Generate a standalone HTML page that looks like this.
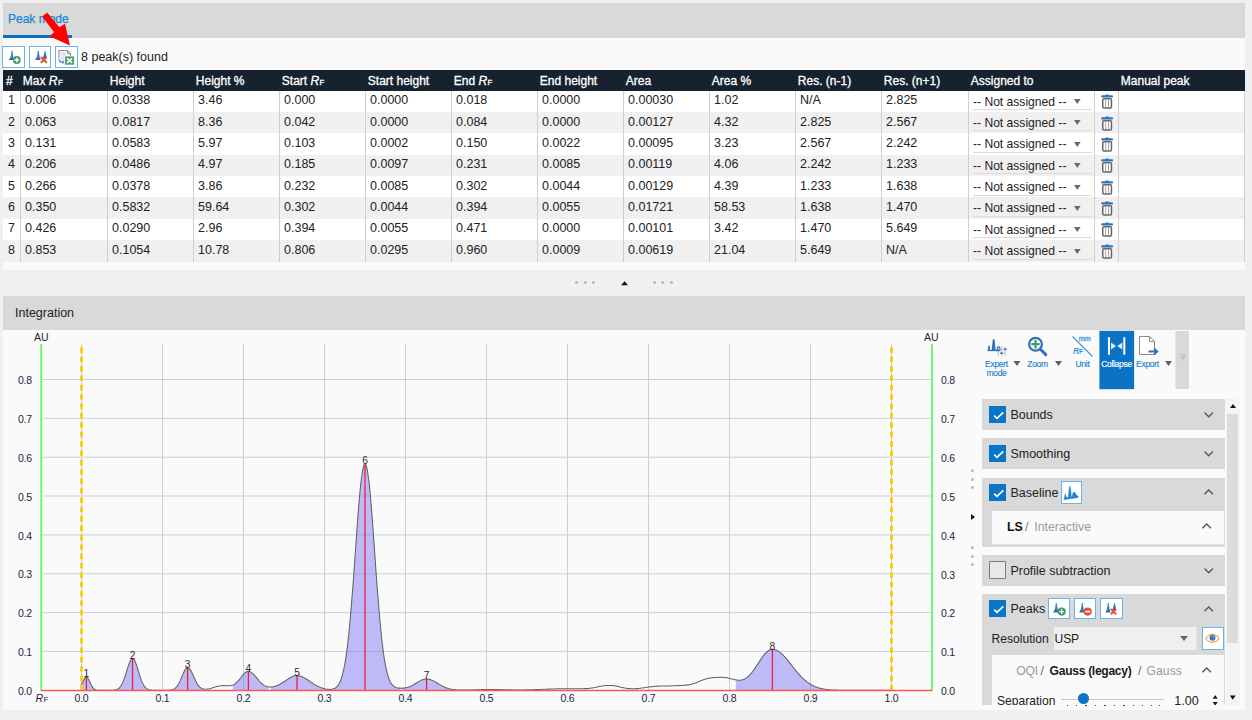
<!DOCTYPE html>
<html><head><meta charset="utf-8">
<style>
*{box-sizing:border-box;margin:0;padding:0}
html,body{width:1252px;height:720px;overflow:hidden;background:#f0f0f0;font-family:"Liberation Sans",sans-serif;color:#222;font-size:12px}
.abs{position:absolute}
#tabbar{position:absolute;left:3px;top:3px;width:1242px;height:35px;background:#d9d9d9}
#tabtxt{position:absolute;left:8px;top:12px;font-size:12px;color:#1a86d4;white-space:nowrap;-webkit-text-stroke:0.25px #1a86d4}
#tabline{position:absolute;left:3px;top:35px;width:69px;height:3px;background:#0b72c5}
#top{position:absolute;left:3px;top:38px;width:1242px;height:232px;background:#fafafa}
.tbtn{position:absolute;top:46px;width:23px;height:22px;border:1px solid #6cb2e6;background:#fff}
#found{position:absolute;left:81px;top:50.4px;font-size:12.5px;color:#222;white-space:nowrap}
.thead{position:absolute;left:3px;top:70px;width:1242px;height:20.5px;background:#16232f}
.th{position:absolute;top:3.5px;color:#fff;font-size:12px;white-space:nowrap;-webkit-text-stroke:0.3px #fff}
.th i{font-style:italic;font-size:12.2px}
.th small{font-size:8px;margin-left:0.3px}
.tr{position:absolute;left:3px;width:1242px;height:21.375px}
.td{position:absolute;top:2.7px;font-size:12.5px;color:#222;white-space:nowrap}
.vl{position:absolute;top:90.5px;height:171px;width:1px;background:#cfcfcf}
.dd{position:absolute;left:970px;top:4px;font-size:12.1px;color:#222;white-space:nowrap}
.ddarr{position:absolute;left:1071.3px;top:8.6px}
.ddline{position:absolute;left:970px;top:18.6px;width:118.6px;height:1px;background:#dcdcdc}
.trash{position:absolute;left:1098.2px;top:3.7px;width:13px;height:15px}
#gap{position:absolute;left:0;top:270px;width:1252px;height:26px}
.dot{position:absolute;width:3px;height:3px;border-radius:50%;background:#b8b8b8}
#inthdr{position:absolute;left:3px;top:296px;width:1242px;height:34px;background:#d9d9d9}
#inttxt{position:absolute;left:15px;top:305.6px;font-size:12.5px;color:#222}
#chartbg{position:absolute;left:3px;top:330px;width:1242px;height:379.6px;background:#fafafa}
#chart{position:absolute;left:0;top:0;width:1252px;height:720px}
.yl{position:absolute;font-size:10.5px;color:#1e1e3c;white-space:nowrap}
.xl{position:absolute;font-size:10.5px;color:#1e1e3c;white-space:nowrap}
.tool{position:absolute;font-size:8.5px;color:#1a80c8;text-align:center;line-height:9.3px;white-space:nowrap;letter-spacing:-0.3px;-webkit-text-stroke:0.15px currentColor}
.panel{position:absolute;left:982px;width:243px;background:#d9d9d9}
.cb{position:absolute;left:7px;width:17.2px;height:17.2px;background:#0a74c6}
.cb svg{position:absolute;left:3px;top:4px}
.ptitle{position:absolute;left:28px;font-size:12.5px;color:#222;white-space:nowrap}
.chev{position:absolute;left:220px}
.ibtn{position:absolute;width:22px;height:22px;border:1px solid #6cb2e6;background:#fff}
</style></head><body>
<div id="tabbar"></div>
<div id="tabtxt">Peak mode</div>
<div id="tabline"></div>
<div id="top"></div>
<div class="tbtn" style="left:2.4px;width:22.4px;height:21.6px;top:46.3px"></div>
<div class="tbtn" style="left:29.1px;width:21.7px;height:21.6px;top:46.3px"></div>
<div class="tbtn" style="left:55.3px;width:22.3px;height:21.6px;top:46.3px"></div>
<svg class="abs" style="left:0;top:0" width="90" height="70" viewBox="0 0 90 70">
 <defs><linearGradient id="pk" x1="0" y1="0" x2="0" y2="1"><stop offset="0" stop-color="#4d8fd6"/><stop offset="1" stop-color="#2e66b0"/></linearGradient></defs>
 <!-- btn1 -->
 <path d="M8 60 C10.5 59.5 11 56 11.4 51 Q12 49.5 12.6 51 C13 56 13.5 59.5 14.5 60 Z" fill="url(#pk)"/>
 <circle cx="16.8" cy="60" r="3.9" fill="#3e9a66"/>
 <path d="M16.8 57.6 V62.4 M14.4 60 H19.2" stroke="#fff" stroke-width="1.3"/>
 <!-- btn2 -->
 <path d="M34.5 60 C36.5 59.5 37.2 56 37.7 51 Q38.3 49.5 38.9 51 C39.4 56 40 59.5 41 60 Z" fill="url(#pk)"/>
 <path d="M42.5 58 C43.5 57 44 54 44.5 51.3 Q45 50 45.5 51.3 C46 54 46.5 57 47 58 Z" fill="url(#pk)"/>
 <path d="M40.9 57 L46.7 62.8 M46.7 57 L40.9 62.8" stroke="#e05438" stroke-width="2"/>
 <!-- btn3 -->
 <path d="M59 58.5 V50.5 H67.5 L70.5 53.8 V56" fill="none" stroke="#8d8d8d" stroke-width="1.1"/>
 <path d="M67.5 50.5 V53.8 H70.5" fill="none" stroke="#8d8d8d" stroke-width="0.9"/>
 <path d="M60.8 53 H66 M60.8 55 H66 M60.8 57 H64.5 M60.8 59 H64" stroke="#c4c4c4" stroke-width="0.9"/>
 <path d="M59.2 59.3 Q59.2 62.2 62 62.2 H63" fill="none" stroke="#4a86cc" stroke-width="1.3"/>
 <path d="M62.5 60.2 L64.6 62.2 L62.5 64.2 Z" fill="#4a86cc"/>
 <rect x="65" y="56.4" width="9.1" height="8.3" fill="#4f9e6c"/>
 <path d="M67 58.3 L72.1 62.8 M72.1 58.3 L67 62.8" stroke="#fff" stroke-width="1.6"/>
 <!-- red arrow -->
 <path d="M42.2 16.6 L47.2 12.5 L59.4 27.2 L65 23.75 L70 45.6 L49.4 36.25 L54.1 32.2 Z" fill="#ff0000"/>
</svg>
<div id="found">8 peak(s) found</div>
<div class="thead"><span class="th" style="left:3.0px">#</span><span class="th" style="left:19.8px">Max <i>R</i><small>F</small></span><span class="th" style="left:106.8px">Height</span><span class="th" style="left:192.8px">Height %</span><span class="th" style="left:278.8px">Start <i>R</i><small>F</small></span><span class="th" style="left:364.8px">Start height</span><span class="th" style="left:450.8px">End <i>R</i><small>F</small></span><span class="th" style="left:536.8px">End height</span><span class="th" style="left:622.8px">Area</span><span class="th" style="left:708.8px">Area %</span><span class="th" style="left:794.8px">Res. (n-1)</span><span class="th" style="left:880.8px">Res. (n+1)</span><span class="th" style="left:967.8px">Assigned to</span><span class="th" style="left:1093.8px"></span><span class="th" style="left:1117.8px">Manual peak</span></div>
<div class="tr" style="top:90.500px;background:#ffffff"><span class="td" style="left:5px">1</span><span class="td" style="left:22px">0.006</span><span class="td" style="left:109px">0.0338</span><span class="td" style="left:195px">3.46</span><span class="td" style="left:281px">0.000</span><span class="td" style="left:367px">0.0000</span><span class="td" style="left:453px">0.018</span><span class="td" style="left:539px">0.0000</span><span class="td" style="left:625px">0.00030</span><span class="td" style="left:711px">1.02</span><span class="td" style="left:797px">N/A</span><span class="td" style="left:883px">2.825</span><span class="dd">-- Not assigned --</span><svg class="ddarr" width="8" height="6" viewBox="0 0 8 6"><path d="M0 0 H6.6 L3.3 5 Z" fill="#6a6a6a"/></svg><span class="ddline"></span><span class="trash"><svg width="13" height="15" viewBox="0 0 13 15"><rect x="0.2" y="1.3" width="11.8" height="2.2" rx="1" fill="#2a74c4"/><rect x="4.3" y="0.6" width="3.6" height="1.3" rx="0.6" fill="#2a74c4"/><rect x="1.75" y="4.65" width="8.7" height="9.3" rx="1.2" fill="#fff" stroke="#676767" stroke-width="1.5"/><path d="M4.7 5.4 V13.2 M7.5 5.4 V13.2" stroke="#9a9a9a" stroke-width="0.9"/></svg></span></div><div class="tr" style="top:111.875px;background:#f0f0f0"><span class="td" style="left:5px">2</span><span class="td" style="left:22px">0.063</span><span class="td" style="left:109px">0.0817</span><span class="td" style="left:195px">8.36</span><span class="td" style="left:281px">0.042</span><span class="td" style="left:367px">0.0000</span><span class="td" style="left:453px">0.084</span><span class="td" style="left:539px">0.0000</span><span class="td" style="left:625px">0.00127</span><span class="td" style="left:711px">4.32</span><span class="td" style="left:797px">2.825</span><span class="td" style="left:883px">2.567</span><span class="dd">-- Not assigned --</span><svg class="ddarr" width="8" height="6" viewBox="0 0 8 6"><path d="M0 0 H6.6 L3.3 5 Z" fill="#6a6a6a"/></svg><span class="ddline"></span><span class="trash"><svg width="13" height="15" viewBox="0 0 13 15"><rect x="0.2" y="1.3" width="11.8" height="2.2" rx="1" fill="#2a74c4"/><rect x="4.3" y="0.6" width="3.6" height="1.3" rx="0.6" fill="#2a74c4"/><rect x="1.75" y="4.65" width="8.7" height="9.3" rx="1.2" fill="#fff" stroke="#676767" stroke-width="1.5"/><path d="M4.7 5.4 V13.2 M7.5 5.4 V13.2" stroke="#9a9a9a" stroke-width="0.9"/></svg></span></div><div class="tr" style="top:133.250px;background:#ffffff"><span class="td" style="left:5px">3</span><span class="td" style="left:22px">0.131</span><span class="td" style="left:109px">0.0583</span><span class="td" style="left:195px">5.97</span><span class="td" style="left:281px">0.103</span><span class="td" style="left:367px">0.0002</span><span class="td" style="left:453px">0.150</span><span class="td" style="left:539px">0.0022</span><span class="td" style="left:625px">0.00095</span><span class="td" style="left:711px">3.23</span><span class="td" style="left:797px">2.567</span><span class="td" style="left:883px">2.242</span><span class="dd">-- Not assigned --</span><svg class="ddarr" width="8" height="6" viewBox="0 0 8 6"><path d="M0 0 H6.6 L3.3 5 Z" fill="#6a6a6a"/></svg><span class="ddline"></span><span class="trash"><svg width="13" height="15" viewBox="0 0 13 15"><rect x="0.2" y="1.3" width="11.8" height="2.2" rx="1" fill="#2a74c4"/><rect x="4.3" y="0.6" width="3.6" height="1.3" rx="0.6" fill="#2a74c4"/><rect x="1.75" y="4.65" width="8.7" height="9.3" rx="1.2" fill="#fff" stroke="#676767" stroke-width="1.5"/><path d="M4.7 5.4 V13.2 M7.5 5.4 V13.2" stroke="#9a9a9a" stroke-width="0.9"/></svg></span></div><div class="tr" style="top:154.625px;background:#f0f0f0"><span class="td" style="left:5px">4</span><span class="td" style="left:22px">0.206</span><span class="td" style="left:109px">0.0486</span><span class="td" style="left:195px">4.97</span><span class="td" style="left:281px">0.185</span><span class="td" style="left:367px">0.0097</span><span class="td" style="left:453px">0.231</span><span class="td" style="left:539px">0.0085</span><span class="td" style="left:625px">0.00119</span><span class="td" style="left:711px">4.06</span><span class="td" style="left:797px">2.242</span><span class="td" style="left:883px">1.233</span><span class="dd">-- Not assigned --</span><svg class="ddarr" width="8" height="6" viewBox="0 0 8 6"><path d="M0 0 H6.6 L3.3 5 Z" fill="#6a6a6a"/></svg><span class="ddline"></span><span class="trash"><svg width="13" height="15" viewBox="0 0 13 15"><rect x="0.2" y="1.3" width="11.8" height="2.2" rx="1" fill="#2a74c4"/><rect x="4.3" y="0.6" width="3.6" height="1.3" rx="0.6" fill="#2a74c4"/><rect x="1.75" y="4.65" width="8.7" height="9.3" rx="1.2" fill="#fff" stroke="#676767" stroke-width="1.5"/><path d="M4.7 5.4 V13.2 M7.5 5.4 V13.2" stroke="#9a9a9a" stroke-width="0.9"/></svg></span></div><div class="tr" style="top:176.000px;background:#ffffff"><span class="td" style="left:5px">5</span><span class="td" style="left:22px">0.266</span><span class="td" style="left:109px">0.0378</span><span class="td" style="left:195px">3.86</span><span class="td" style="left:281px">0.232</span><span class="td" style="left:367px">0.0085</span><span class="td" style="left:453px">0.302</span><span class="td" style="left:539px">0.0044</span><span class="td" style="left:625px">0.00129</span><span class="td" style="left:711px">4.39</span><span class="td" style="left:797px">1.233</span><span class="td" style="left:883px">1.638</span><span class="dd">-- Not assigned --</span><svg class="ddarr" width="8" height="6" viewBox="0 0 8 6"><path d="M0 0 H6.6 L3.3 5 Z" fill="#6a6a6a"/></svg><span class="ddline"></span><span class="trash"><svg width="13" height="15" viewBox="0 0 13 15"><rect x="0.2" y="1.3" width="11.8" height="2.2" rx="1" fill="#2a74c4"/><rect x="4.3" y="0.6" width="3.6" height="1.3" rx="0.6" fill="#2a74c4"/><rect x="1.75" y="4.65" width="8.7" height="9.3" rx="1.2" fill="#fff" stroke="#676767" stroke-width="1.5"/><path d="M4.7 5.4 V13.2 M7.5 5.4 V13.2" stroke="#9a9a9a" stroke-width="0.9"/></svg></span></div><div class="tr" style="top:197.375px;background:#f0f0f0"><span class="td" style="left:5px">6</span><span class="td" style="left:22px">0.350</span><span class="td" style="left:109px">0.5832</span><span class="td" style="left:195px">59.64</span><span class="td" style="left:281px">0.302</span><span class="td" style="left:367px">0.0044</span><span class="td" style="left:453px">0.394</span><span class="td" style="left:539px">0.0055</span><span class="td" style="left:625px">0.01721</span><span class="td" style="left:711px">58.53</span><span class="td" style="left:797px">1.638</span><span class="td" style="left:883px">1.470</span><span class="dd">-- Not assigned --</span><svg class="ddarr" width="8" height="6" viewBox="0 0 8 6"><path d="M0 0 H6.6 L3.3 5 Z" fill="#6a6a6a"/></svg><span class="ddline"></span><span class="trash"><svg width="13" height="15" viewBox="0 0 13 15"><rect x="0.2" y="1.3" width="11.8" height="2.2" rx="1" fill="#2a74c4"/><rect x="4.3" y="0.6" width="3.6" height="1.3" rx="0.6" fill="#2a74c4"/><rect x="1.75" y="4.65" width="8.7" height="9.3" rx="1.2" fill="#fff" stroke="#676767" stroke-width="1.5"/><path d="M4.7 5.4 V13.2 M7.5 5.4 V13.2" stroke="#9a9a9a" stroke-width="0.9"/></svg></span></div><div class="tr" style="top:218.750px;background:#ffffff"><span class="td" style="left:5px">7</span><span class="td" style="left:22px">0.426</span><span class="td" style="left:109px">0.0290</span><span class="td" style="left:195px">2.96</span><span class="td" style="left:281px">0.394</span><span class="td" style="left:367px">0.0055</span><span class="td" style="left:453px">0.471</span><span class="td" style="left:539px">0.0000</span><span class="td" style="left:625px">0.00101</span><span class="td" style="left:711px">3.42</span><span class="td" style="left:797px">1.470</span><span class="td" style="left:883px">5.649</span><span class="dd">-- Not assigned --</span><svg class="ddarr" width="8" height="6" viewBox="0 0 8 6"><path d="M0 0 H6.6 L3.3 5 Z" fill="#6a6a6a"/></svg><span class="ddline"></span><span class="trash"><svg width="13" height="15" viewBox="0 0 13 15"><rect x="0.2" y="1.3" width="11.8" height="2.2" rx="1" fill="#2a74c4"/><rect x="4.3" y="0.6" width="3.6" height="1.3" rx="0.6" fill="#2a74c4"/><rect x="1.75" y="4.65" width="8.7" height="9.3" rx="1.2" fill="#fff" stroke="#676767" stroke-width="1.5"/><path d="M4.7 5.4 V13.2 M7.5 5.4 V13.2" stroke="#9a9a9a" stroke-width="0.9"/></svg></span></div><div class="tr" style="top:240.125px;background:#f0f0f0"><span class="td" style="left:5px">8</span><span class="td" style="left:22px">0.853</span><span class="td" style="left:109px">0.1054</span><span class="td" style="left:195px">10.78</span><span class="td" style="left:281px">0.806</span><span class="td" style="left:367px">0.0295</span><span class="td" style="left:453px">0.960</span><span class="td" style="left:539px">0.0009</span><span class="td" style="left:625px">0.00619</span><span class="td" style="left:711px">21.04</span><span class="td" style="left:797px">5.649</span><span class="td" style="left:883px">N/A</span><span class="dd">-- Not assigned --</span><svg class="ddarr" width="8" height="6" viewBox="0 0 8 6"><path d="M0 0 H6.6 L3.3 5 Z" fill="#6a6a6a"/></svg><span class="ddline"></span><span class="trash"><svg width="13" height="15" viewBox="0 0 13 15"><rect x="0.2" y="1.3" width="11.8" height="2.2" rx="1" fill="#2a74c4"/><rect x="4.3" y="0.6" width="3.6" height="1.3" rx="0.6" fill="#2a74c4"/><rect x="1.75" y="4.65" width="8.7" height="9.3" rx="1.2" fill="#fff" stroke="#676767" stroke-width="1.5"/><path d="M4.7 5.4 V13.2 M7.5 5.4 V13.2" stroke="#9a9a9a" stroke-width="0.9"/></svg></span></div>
<div class="vl" style="left:20px"></div><div class="vl" style="left:107px"></div><div class="vl" style="left:193px"></div><div class="vl" style="left:279px"></div><div class="vl" style="left:365px"></div><div class="vl" style="left:451px"></div><div class="vl" style="left:537px"></div><div class="vl" style="left:623px"></div><div class="vl" style="left:709px"></div><div class="vl" style="left:795px"></div><div class="vl" style="left:881px"></div><div class="vl" style="left:968px"></div><div class="vl" style="left:1094px"></div><div class="vl" style="left:1118px"></div><div class="vl" style="left:1244px"></div>
<div class="dot" style="left:575px;top:281px"></div>
<div class="dot" style="left:584px;top:281px"></div>
<div class="dot" style="left:592px;top:281px"></div>
<svg class="abs" style="left:620px;top:280px" width="10" height="7" viewBox="0 0 10 7"><path d="M1.2 5.2 H8 L4.6 1.2 Z" fill="#111"/></svg>
<div class="dot" style="left:653px;top:281px"></div>
<div class="dot" style="left:661px;top:281px"></div>
<div class="dot" style="left:670px;top:281px"></div>
<div id="inthdr"></div>
<div id="inttxt">Integration</div>
<div id="chartbg"></div>
<svg id="chart" width="1252" height="720" viewBox="0 0 1252 720" font-family="Liberation Sans" fill="#1e1e3c">
<line x1="162.5" y1="344" x2="162.5" y2="690" stroke="#c5d2de" stroke-width="1"/>
<line x1="243.5" y1="344" x2="243.5" y2="690" stroke="#c5d2de" stroke-width="1"/>
<line x1="324.5" y1="344" x2="324.5" y2="690" stroke="#c5d2de" stroke-width="1"/>
<line x1="405.5" y1="344" x2="405.5" y2="690" stroke="#c5d2de" stroke-width="1"/>
<line x1="486.5" y1="344" x2="486.5" y2="690" stroke="#c5d2de" stroke-width="1"/>
<line x1="567.5" y1="344" x2="567.5" y2="690" stroke="#c5d2de" stroke-width="1"/>
<line x1="648.5" y1="344" x2="648.5" y2="690" stroke="#c5d2de" stroke-width="1"/>
<line x1="729.5" y1="344" x2="729.5" y2="690" stroke="#c5d2de" stroke-width="1"/>
<line x1="810.5" y1="344" x2="810.5" y2="690" stroke="#c5d2de" stroke-width="1"/>
<line x1="41" y1="651.4" x2="931" y2="651.4" stroke="#c5d2de" stroke-width="1"/>
<line x1="41" y1="612.6" x2="931" y2="612.6" stroke="#c5d2de" stroke-width="1"/>
<line x1="41" y1="573.8" x2="931" y2="573.8" stroke="#c5d2de" stroke-width="1"/>
<line x1="41" y1="534.9" x2="931" y2="534.9" stroke="#c5d2de" stroke-width="1"/>
<line x1="41" y1="496.0" x2="931" y2="496.0" stroke="#c5d2de" stroke-width="1"/>
<line x1="41" y1="457.2" x2="931" y2="457.2" stroke="#c5d2de" stroke-width="1"/>
<line x1="41" y1="418.3" x2="931" y2="418.3" stroke="#c5d2de" stroke-width="1"/>
<line x1="41" y1="379.5" x2="931" y2="379.5" stroke="#c5d2de" stroke-width="1"/>
<line x1="81.5" y1="344" x2="81.5" y2="690" stroke="#c5d2de" stroke-width="1"/>
<line x1="891.5" y1="344" x2="891.5" y2="690" stroke="#c5d2de" stroke-width="1"/>
<path d="M81.5 684.9 L81.9 684.1 L82.3 683.2 L82.7 682.3 L83.1 681.5 L83.5 680.6 L83.9 679.8 L84.3 679.0 L84.7 678.4 L85.1 677.9 L85.5 677.5 L86.0 677.2 L86.4 677.2 L86.8 677.2 L87.2 677.5 L87.6 677.9 L88.0 678.4 L88.4 679.0 L88.8 679.8 L89.2 680.6 L89.6 681.5 L90.0 682.3 L90.4 683.2 L90.8 684.1 L91.2 684.9 L91.6 685.7 L92.0 686.4 L92.4 687.0 L92.8 687.6 L93.2 688.1 L93.7 688.5 L94.1 688.9 L94.5 689.2 L94.9 689.4 L95.3 689.6 L95.7 689.8 L96.1 689.9 L96.1 690.3 L81.5 690.3 Z" fill="#7a72f4" fill-opacity="0.47" stroke="none"/>
<path d="M117.0 689.4 L117.4 689.2 L117.8 689.0 L118.2 688.7 L118.6 688.5 L119.0 688.1 L119.4 687.8 L119.8 687.3 L120.2 686.9 L120.6 686.3 L121.0 685.7 L121.5 685.1 L121.9 684.3 L122.3 683.5 L122.7 682.7 L123.1 681.8 L123.5 680.8 L123.9 679.7 L124.3 678.6 L124.7 677.4 L125.1 676.1 L125.5 674.9 L125.9 673.6 L126.3 672.2 L126.7 670.9 L127.2 669.5 L127.6 668.2 L128.0 666.9 L128.4 665.7 L128.8 664.5 L129.2 663.4 L129.6 662.3 L130.0 661.4 L130.4 660.6 L130.8 659.9 L131.2 659.3 L131.6 658.9 L132.0 658.7 L132.4 658.6 L132.9 658.6 L133.3 658.8 L133.7 659.2 L134.1 659.7 L134.5 660.3 L134.9 661.0 L135.3 661.9 L135.7 662.9 L136.1 664.0 L136.5 665.2 L136.9 666.4 L137.3 667.7 L137.7 669.0 L138.1 670.3 L138.6 671.7 L139.0 673.0 L139.4 674.3 L139.8 675.6 L140.2 676.9 L140.6 678.1 L141.0 679.2 L141.4 680.3 L141.8 681.3 L142.2 682.3 L142.6 683.2 L143.0 684.0 L143.4 684.8 L143.8 685.5 L144.2 686.1 L144.7 686.6 L145.1 687.1 L145.5 687.6 L145.9 688.0 L146.3 688.3 L146.7 688.6 L147.1 688.9 L147.5 689.1 L147.9 689.3 L148.3 689.5 L148.7 689.6 L149.1 689.7 L149.5 689.8 L149.5 690.3 L117.0 690.3 Z" fill="#7a72f4" fill-opacity="0.47" stroke="none"/>
<path d="M166.4 690.3 L166.8 690.3 L167.2 690.3 L167.6 690.3 L168.0 690.2 L168.4 690.2 L168.8 690.2 L169.2 690.2 L169.6 690.2 L170.0 690.1 L170.5 690.1 L170.9 690.0 L171.3 689.9 L171.7 689.9 L172.1 689.8 L172.5 689.7 L172.9 689.5 L173.3 689.4 L173.7 689.2 L174.1 689.0 L174.5 688.7 L174.9 688.4 L175.3 688.1 L175.7 687.8 L176.2 687.4 L176.6 686.9 L177.0 686.4 L177.4 685.9 L177.8 685.3 L178.2 684.6 L178.6 683.9 L179.0 683.2 L179.4 682.4 L179.8 681.5 L180.2 680.6 L180.6 679.7 L181.0 678.7 L181.4 677.8 L181.8 676.8 L182.3 675.8 L182.7 674.8 L183.1 673.9 L183.5 672.9 L183.9 672.1 L184.3 671.2 L184.7 670.5 L185.1 669.8 L185.5 669.2 L185.9 668.6 L186.3 668.2 L186.7 667.9 L187.1 667.7 L187.5 667.7 L187.9 667.7 L188.4 667.8 L188.8 668.1 L189.2 668.4 L189.6 668.8 L190.0 669.3 L190.4 669.9 L190.8 670.6 L191.2 671.3 L191.6 672.1 L192.0 672.9 L192.4 673.7 L192.8 674.6 L193.2 675.5 L193.6 676.4 L194.1 677.4 L194.5 678.3 L194.9 679.2 L195.3 680.0 L195.7 680.9 L196.1 681.7 L196.5 682.5 L196.9 683.2 L197.3 683.9 L197.7 684.5 L198.1 685.1 L198.5 685.7 L198.9 686.2 L199.3 686.6 L199.7 687.0 L200.2 687.4 L200.6 687.7 L201.0 688.0 L201.4 688.3 L201.8 688.5 L202.2 688.7 L202.6 688.8 L203.0 689.0 L203.0 690.3 L166.4 690.3 Z" fill="#7a72f4" fill-opacity="0.47" stroke="none"/>
<path d="M232.8 685.0 L233.2 684.8 L233.6 684.6 L234.0 684.4 L234.4 684.2 L234.8 683.9 L235.2 683.6 L235.7 683.3 L236.1 683.0 L236.5 682.6 L236.9 682.2 L237.3 681.8 L237.7 681.4 L238.1 680.9 L238.5 680.4 L238.9 680.0 L239.3 679.5 L239.7 679.0 L240.1 678.5 L240.5 677.9 L240.9 677.4 L241.4 676.9 L241.8 676.4 L242.2 675.9 L242.6 675.4 L243.0 674.9 L243.4 674.5 L243.8 674.0 L244.2 673.6 L244.6 673.2 L245.0 672.9 L245.4 672.5 L245.8 672.3 L246.2 672.0 L246.6 671.8 L247.0 671.6 L247.5 671.5 L247.9 671.5 L248.3 671.4 L248.7 671.4 L249.1 671.5 L249.5 671.6 L249.9 671.7 L250.3 671.9 L250.7 672.1 L251.1 672.3 L251.5 672.6 L251.9 672.9 L252.3 673.2 L252.7 673.6 L253.2 674.0 L253.6 674.4 L254.0 674.8 L254.4 675.2 L254.8 675.7 L255.2 676.1 L255.6 676.6 L256.0 677.1 L256.4 677.6 L256.8 678.1 L257.2 678.6 L257.6 679.1 L258.0 679.6 L258.4 680.1 L258.8 680.5 L259.3 681.0 L259.7 681.4 L260.1 681.9 L260.5 682.3 L260.9 682.7 L261.3 683.1 L261.7 683.5 L262.1 683.8 L262.5 684.2 L262.9 684.5 L263.3 684.8 L263.7 685.1 L264.1 685.3 L264.5 685.6 L264.9 685.8 L265.4 686.0 L265.8 686.2 L266.2 686.3 L266.6 686.5 L267.0 686.6 L267.4 686.7 L267.8 686.8 L268.2 686.9 L268.6 686.9 L268.6 690.3 L232.8 690.3 Z" fill="#7a72f4" fill-opacity="0.47" stroke="none"/>
<path d="M270.9 687.0 L271.3 687.0 L271.7 687.0 L272.1 686.9 L272.5 686.9 L272.9 686.8 L273.3 686.7 L273.7 686.6 L274.1 686.5 L274.5 686.4 L274.9 686.3 L275.3 686.2 L275.8 686.1 L276.2 685.9 L276.6 685.8 L277.0 685.6 L277.4 685.5 L277.8 685.3 L278.2 685.1 L278.6 684.9 L279.0 684.7 L279.4 684.5 L279.8 684.3 L280.2 684.1 L280.6 683.9 L281.0 683.6 L281.4 683.4 L281.8 683.2 L282.3 682.9 L282.7 682.6 L283.1 682.4 L283.5 682.1 L283.9 681.8 L284.3 681.6 L284.7 681.3 L285.1 681.0 L285.5 680.7 L285.9 680.5 L286.3 680.2 L286.7 679.9 L287.1 679.6 L287.5 679.3 L287.9 679.1 L288.3 678.8 L288.8 678.6 L289.2 678.3 L289.6 678.1 L290.0 677.8 L290.4 677.6 L290.8 677.4 L291.2 677.2 L291.6 677.0 L292.0 676.8 L292.4 676.6 L292.8 676.4 L293.2 676.3 L293.6 676.1 L294.0 676.0 L294.4 675.9 L294.8 675.8 L295.2 675.8 L295.7 675.7 L296.1 675.6 L296.5 675.6 L296.9 675.6 L297.3 675.6 L297.7 675.6 L298.1 675.7 L298.5 675.7 L298.9 675.8 L299.3 675.9 L299.7 675.9 L300.1 676.0 L300.5 676.2 L300.9 676.3 L301.3 676.4 L301.7 676.6 L302.2 676.7 L302.6 676.9 L303.0 677.1 L303.4 677.3 L303.8 677.5 L304.2 677.7 L304.6 678.0 L305.0 678.2 L305.4 678.4 L305.8 678.7 L306.2 678.9 L306.6 679.2 L307.0 679.4 L307.4 679.7 L307.8 680.0 L308.2 680.2 L308.7 680.5 L309.1 680.8 L309.5 681.1 L309.9 681.4 L310.3 681.6 L310.7 681.9 L311.1 682.2 L311.5 682.5 L311.9 682.7 L312.3 683.0 L312.7 683.3 L313.1 683.6 L313.5 683.8 L313.9 684.1 L314.3 684.3 L314.7 684.6 L315.2 684.8 L315.6 685.1 L316.0 685.3 L316.4 685.5 L316.8 685.7 L317.2 686.0 L317.6 686.2 L318.0 686.4 L318.4 686.6 L318.8 686.8 L319.2 686.9 L319.6 687.1 L320.0 687.3 L320.4 687.4 L320.8 687.6 L321.2 687.8 L321.7 687.9 L322.1 688.0 L322.5 688.2 L322.9 688.3 L323.3 688.4 L323.7 688.5 L324.1 688.6 L324.5 688.7 L324.9 688.8 L325.3 688.9 L325.7 689.0 L326.1 689.1 L326.1 690.3 L270.9 690.3 Z" fill="#7a72f4" fill-opacity="0.47" stroke="none"/>
<path d="M327.6 689.3 L328.0 689.3 L328.4 689.3 L328.8 689.4 L329.2 689.4 L329.6 689.4 L330.0 689.4 L330.4 689.4 L330.8 689.3 L331.2 689.3 L331.6 689.3 L332.0 689.2 L332.4 689.1 L332.9 689.0 L333.3 688.9 L333.7 688.8 L334.1 688.6 L334.5 688.4 L334.9 688.2 L335.3 688.0 L335.7 687.7 L336.1 687.4 L336.5 687.1 L336.9 686.7 L337.3 686.3 L337.7 685.8 L338.1 685.2 L338.5 684.6 L338.9 684.0 L339.3 683.3 L339.8 682.5 L340.2 681.6 L340.6 680.6 L341.0 679.6 L341.4 678.4 L341.8 677.2 L342.2 675.8 L342.6 674.4 L343.0 672.8 L343.4 671.1 L343.8 669.2 L344.2 667.2 L344.6 665.1 L345.0 662.8 L345.4 660.4 L345.8 657.8 L346.2 655.0 L346.7 652.1 L347.1 649.0 L347.5 645.8 L347.9 642.3 L348.3 638.7 L348.7 634.9 L349.1 630.9 L349.5 626.8 L349.9 622.5 L350.3 618.0 L350.7 613.4 L351.1 608.6 L351.5 603.6 L351.9 598.5 L352.3 593.3 L352.7 588.0 L353.1 582.5 L353.6 577.0 L354.0 571.4 L354.4 565.7 L354.8 560.0 L355.2 554.3 L355.6 548.6 L356.0 542.8 L356.4 537.2 L356.8 531.5 L357.2 526.0 L357.6 520.5 L358.0 515.2 L358.4 510.0 L358.8 505.0 L359.2 500.2 L359.6 495.6 L360.1 491.3 L360.5 487.2 L360.9 483.4 L361.3 479.8 L361.7 476.6 L362.1 473.7 L362.5 471.2 L362.9 469.0 L363.3 467.2 L363.7 465.7 L364.1 464.7 L364.5 464.0 L364.9 463.7 L365.3 463.9 L365.7 464.4 L366.1 465.3 L366.5 466.6 L367.0 468.2 L367.4 470.3 L367.8 472.7 L368.2 475.4 L368.6 478.5 L369.0 481.9 L369.4 485.7 L369.8 489.6 L370.2 493.9 L370.6 498.4 L371.0 503.1 L371.4 508.1 L371.8 513.2 L372.2 518.4 L372.6 523.8 L373.0 529.3 L373.4 534.9 L373.9 540.6 L374.3 546.3 L374.7 552.0 L375.1 557.8 L375.5 563.5 L375.9 569.2 L376.3 574.8 L376.7 580.4 L377.1 585.8 L377.5 591.2 L377.9 596.5 L378.3 601.6 L378.7 606.6 L379.1 611.4 L379.5 616.1 L379.9 620.7 L380.3 625.0 L380.8 629.2 L381.2 633.3 L381.6 637.1 L382.0 640.8 L382.4 644.3 L382.8 647.6 L383.2 650.7 L383.6 653.7 L384.0 656.5 L384.4 659.1 L384.8 661.6 L385.2 663.9 L385.6 666.1 L386.0 668.1 L386.4 670.0 L386.8 671.7 L387.2 673.3 L387.7 674.8 L388.1 676.2 L388.5 677.4 L388.9 678.6 L389.3 679.6 L389.7 680.6 L390.1 681.4 L390.5 682.2 L390.9 682.9 L391.3 683.6 L391.7 684.2 L392.1 684.7 L392.5 685.1 L392.9 685.6 L393.3 685.9 L393.7 686.3 L394.1 686.5 L394.6 686.8 L395.0 687.0 L395.4 687.2 L395.8 687.4 L396.2 687.5 L396.6 687.7 L397.0 687.8 L397.4 687.9 L397.8 687.9 L398.2 688.0 L398.6 688.0 L399.0 688.1 L399.4 688.1 L399.8 688.1 L400.2 688.2 L400.6 688.2 L400.6 690.3 L327.6 690.3 Z" fill="#7a72f4" fill-opacity="0.47" stroke="none"/>
<path d="M402.1 688.1 L402.5 688.1 L402.9 688.1 L403.3 688.0 L403.7 688.0 L404.1 688.0 L404.5 687.9 L404.9 687.9 L405.3 687.8 L405.8 687.7 L406.2 687.6 L406.6 687.5 L407.0 687.5 L407.4 687.3 L407.8 687.2 L408.2 687.1 L408.6 687.0 L409.0 686.9 L409.4 686.7 L409.8 686.6 L410.2 686.4 L410.6 686.2 L411.0 686.1 L411.4 685.9 L411.8 685.7 L412.3 685.5 L412.7 685.3 L413.1 685.0 L413.5 684.8 L413.9 684.6 L414.3 684.4 L414.7 684.1 L415.1 683.9 L415.5 683.6 L415.9 683.4 L416.3 683.1 L416.7 682.9 L417.1 682.7 L417.5 682.4 L417.9 682.2 L418.3 681.9 L418.7 681.7 L419.2 681.4 L419.6 681.2 L420.0 681.0 L420.4 680.8 L420.8 680.6 L421.2 680.4 L421.6 680.2 L422.0 680.0 L422.4 679.9 L422.8 679.7 L423.2 679.6 L423.6 679.5 L424.0 679.3 L424.4 679.3 L424.8 679.2 L425.2 679.1 L425.7 679.1 L426.1 679.0 L426.5 679.0 L426.9 679.0 L427.3 679.1 L427.7 679.1 L428.1 679.1 L428.5 679.2 L428.9 679.3 L429.3 679.4 L429.7 679.5 L430.1 679.6 L430.5 679.7 L430.9 679.8 L431.3 680.0 L431.7 680.2 L432.1 680.3 L432.6 680.5 L433.0 680.7 L433.4 680.9 L433.8 681.1 L434.2 681.3 L434.6 681.5 L435.0 681.8 L435.4 682.0 L435.8 682.2 L436.2 682.5 L436.6 682.7 L437.0 682.9 L437.4 683.2 L437.8 683.4 L438.2 683.7 L438.6 683.9 L439.1 684.2 L439.5 684.4 L439.9 684.6 L440.3 684.9 L440.7 685.1 L441.1 685.3 L441.5 685.6 L441.9 685.8 L442.3 686.0 L442.7 686.2 L443.1 686.4 L443.5 686.6 L443.9 686.8 L444.3 687.0 L444.7 687.2 L445.1 687.3 L445.5 687.5 L446.0 687.7 L446.4 687.8 L446.8 688.0 L447.2 688.1 L447.6 688.3 L448.0 688.4 L448.4 688.5 L448.8 688.6 L449.2 688.7 L449.6 688.8 L450.0 688.9 L450.4 689.0 L450.8 689.1 L451.2 689.2 L451.6 689.3 L452.0 689.4 L452.5 689.4 L452.9 689.5 L453.3 689.5 L453.7 689.6 L454.1 689.6 L454.5 689.7 L454.9 689.7 L455.3 689.8 L455.7 689.8 L456.1 689.8 L456.5 689.9 L456.9 689.9 L457.3 689.9 L457.7 689.9 L458.1 690.0 L458.5 690.0 L458.9 690.0 L459.4 690.0 L459.8 690.0 L460.2 690.0 L460.6 690.0 L461.0 690.0 L461.4 690.0 L461.8 690.1 L462.2 690.1 L462.6 690.1 L463.0 690.1 L463.0 690.3 L402.1 690.3 Z" fill="#7a72f4" fill-opacity="0.47" stroke="none"/>
<path d="M735.8 679.8 L736.2 679.9 L736.6 680.0 L737.0 680.1 L737.4 680.1 L737.8 680.2 L738.3 680.2 L738.7 680.2 L739.1 680.2 L739.5 680.2 L739.9 680.2 L740.3 680.2 L740.7 680.2 L741.1 680.1 L741.5 680.1 L741.9 680.0 L742.3 679.9 L742.7 679.8 L743.1 679.6 L743.5 679.5 L743.9 679.3 L744.3 679.1 L744.7 678.9 L745.1 678.7 L745.6 678.5 L746.0 678.2 L746.4 677.9 L746.8 677.6 L747.2 677.3 L747.6 677.0 L748.0 676.6 L748.4 676.3 L748.8 675.9 L749.2 675.5 L749.6 675.1 L750.0 674.6 L750.4 674.2 L750.8 673.7 L751.2 673.2 L751.6 672.7 L752.0 672.2 L752.4 671.7 L752.9 671.2 L753.3 670.6 L753.7 670.1 L754.1 669.5 L754.5 668.9 L754.9 668.3 L755.3 667.7 L755.7 667.1 L756.1 666.5 L756.5 665.9 L756.9 665.3 L757.3 664.7 L757.7 664.0 L758.1 663.4 L758.5 662.8 L758.9 662.2 L759.3 661.5 L759.7 660.9 L760.1 660.3 L760.6 659.7 L761.0 659.1 L761.4 658.5 L761.8 657.9 L762.2 657.4 L762.6 656.8 L763.0 656.3 L763.4 655.7 L763.8 655.2 L764.2 654.7 L764.6 654.2 L765.0 653.8 L765.4 653.3 L765.8 652.9 L766.2 652.5 L766.6 652.1 L767.0 651.7 L767.4 651.4 L767.9 651.1 L768.3 650.8 L768.7 650.5 L769.1 650.3 L769.5 650.1 L769.9 649.9 L770.3 649.7 L770.7 649.6 L771.1 649.5 L771.5 649.4 L771.9 649.4 L772.3 649.3 L772.7 649.3 L773.1 649.4 L773.5 649.4 L773.9 649.5 L774.3 649.5 L774.7 649.6 L775.2 649.7 L775.6 649.9 L776.0 650.0 L776.4 650.2 L776.8 650.4 L777.2 650.6 L777.6 650.8 L778.0 651.0 L778.4 651.2 L778.8 651.5 L779.2 651.8 L779.6 652.1 L780.0 652.4 L780.4 652.7 L780.8 653.0 L781.2 653.3 L781.6 653.7 L782.0 654.1 L782.5 654.4 L782.9 654.8 L783.3 655.2 L783.7 655.7 L784.1 656.1 L784.5 656.5 L784.9 656.9 L785.3 657.4 L785.7 657.9 L786.1 658.3 L786.5 658.8 L786.9 659.3 L787.3 659.8 L787.7 660.3 L788.1 660.7 L788.5 661.2 L788.9 661.8 L789.3 662.3 L789.8 662.8 L790.2 663.3 L790.6 663.8 L791.0 664.3 L791.4 664.8 L791.8 665.3 L792.2 665.9 L792.6 666.4 L793.0 666.9 L793.4 667.4 L793.8 667.9 L794.2 668.4 L794.6 669.0 L795.0 669.5 L795.4 670.0 L795.8 670.5 L796.2 671.0 L796.6 671.5 L797.1 671.9 L797.5 672.4 L797.9 672.9 L798.3 673.4 L798.7 673.8 L799.1 674.3 L799.5 674.8 L799.9 675.2 L800.3 675.6 L800.7 676.1 L801.1 676.5 L801.5 676.9 L801.9 677.3 L802.3 677.7 L802.7 678.1 L803.1 678.5 L803.5 678.9 L803.9 679.3 L804.4 679.7 L804.8 680.0 L805.2 680.4 L805.6 680.7 L806.0 681.1 L806.4 681.4 L806.8 681.7 L807.2 682.0 L807.6 682.3 L808.0 682.6 L808.4 682.9 L808.8 683.2 L809.2 683.5 L809.6 683.7 L810.0 684.0 L810.4 684.2 L810.8 684.5 L811.2 684.7 L811.7 685.0 L812.1 685.2 L812.5 685.4 L812.9 685.6 L813.3 685.8 L813.7 686.0 L814.1 686.2 L814.5 686.4 L814.9 686.5 L815.3 686.7 L815.7 686.9 L816.1 687.0 L816.5 687.2 L816.9 687.3 L817.3 687.5 L817.7 687.6 L818.1 687.7 L818.5 687.8 L819.0 688.0 L819.4 688.1 L819.8 688.2 L820.2 688.3 L820.6 688.4 L821.0 688.5 L821.4 688.6 L821.8 688.7 L822.2 688.8 L822.6 688.8 L823.0 688.9 L823.4 689.0 L823.8 689.1 L824.2 689.1 L824.6 689.2 L825.0 689.2 L825.4 689.3 L825.8 689.4 L826.3 689.4 L826.7 689.5 L827.1 689.5 L827.5 689.6 L827.9 689.6 L828.3 689.6 L828.7 689.7 L829.1 689.7 L829.5 689.7 L829.9 689.8 L830.3 689.8 L830.7 689.8 L831.1 689.9 L831.5 689.9 L831.9 689.9 L832.3 689.9 L832.7 690.0 L833.1 690.0 L833.6 690.0 L834.0 690.0 L834.4 690.0 L834.8 690.1 L835.2 690.1 L835.6 690.1 L836.0 690.1 L836.4 690.1 L836.8 690.1 L837.2 690.1 L837.6 690.2 L838.0 690.2 L838.4 690.2 L838.8 690.2 L839.2 690.2 L839.6 690.2 L840.0 690.2 L840.4 690.2 L840.9 690.2 L841.3 690.2 L841.7 690.2 L842.1 690.2 L842.5 690.2 L842.9 690.2 L843.3 690.2 L843.7 690.3 L844.1 690.3 L844.5 690.3 L844.9 690.3 L845.3 690.3 L845.7 690.3 L846.1 690.3 L846.5 690.3 L846.9 690.3 L847.3 690.3 L847.7 690.3 L848.2 690.3 L848.6 690.3 L849.0 690.3 L849.4 690.3 L849.8 690.3 L850.2 690.3 L850.6 690.3 L851.0 690.3 L851.4 690.3 L851.8 690.3 L852.2 690.3 L852.6 690.3 L853.0 690.3 L853.4 690.3 L853.8 690.3 L854.2 690.3 L854.6 690.3 L855.0 690.3 L855.5 690.3 L855.9 690.3 L856.3 690.3 L856.7 690.3 L857.1 690.3 L857.5 690.3 L857.9 690.3 L858.3 690.3 L858.7 690.3 L859.1 690.3 L859.1 690.3 L735.8 690.3 Z" fill="#7a72f4" fill-opacity="0.47" stroke="none"/>
<path d="M81.5 684.9 L82.3 683.2 L83.1 681.5 L83.9 679.8 L84.7 678.4 L85.5 677.5 L86.4 677.2 L87.2 677.5 L88.0 678.4 L88.8 679.8 L89.6 681.5 L90.4 683.2 L91.2 684.9 L92.0 686.4 L92.8 687.6 L93.7 688.5 L94.5 689.2 L95.3 689.6 L96.1 689.9 L96.9 690.1 L97.7 690.2 L98.5 690.2 L99.3 690.3 L100.1 690.3 L100.9 690.3 L101.8 690.3 L102.6 690.3 L103.4 690.3 L104.2 690.3 L105.0 690.3 L105.8 690.3 L106.6 690.3 L107.4 690.3 L108.2 690.3 L109.0 690.3 L109.8 690.3 L110.7 690.3 L111.5 690.3 L112.3 690.2 L113.1 690.2 L113.9 690.1 L114.7 690.0 L115.5 689.8 L116.3 689.6 L117.1 689.3 L117.9 688.9 L118.8 688.3 L119.6 687.6 L120.4 686.7 L121.2 685.5 L122.0 684.1 L122.8 682.4 L123.6 680.4 L124.4 678.2 L125.2 675.8 L126.0 673.2 L126.9 670.5 L127.7 667.9 L128.5 665.4 L129.3 663.1 L130.1 661.2 L130.9 659.8 L131.7 658.9 L132.5 658.6 L133.3 658.9 L134.2 659.8 L135.0 661.2 L135.8 663.1 L136.6 665.4 L137.4 667.9 L138.2 670.5 L139.0 673.2 L139.8 675.8 L140.6 678.2 L141.4 680.4 L142.2 682.4 L143.1 684.1 L143.9 685.5 L144.7 686.7 L145.5 687.6 L146.3 688.3 L147.1 688.9 L147.9 689.3 L148.7 689.6 L149.5 689.8 L150.4 690.0 L151.2 690.1 L152.0 690.2 L152.8 690.2 L153.6 690.3 L154.4 690.3 L155.2 690.3 L156.0 690.3 L156.8 690.3 L157.6 690.3 L158.4 690.3 L159.3 690.3 L160.1 690.3 L160.9 690.3 L161.7 690.3 L162.5 690.3 L163.3 690.3 L164.1 690.3 L164.9 690.3 L165.7 690.3 L166.6 690.3 L167.4 690.3 L168.2 690.2 L169.0 690.2 L169.8 690.1 L170.6 690.0 L171.4 689.9 L172.2 689.7 L173.0 689.5 L173.8 689.1 L174.7 688.6 L175.5 688.0 L176.3 687.2 L177.1 686.3 L177.9 685.1 L178.7 683.7 L179.5 682.1 L180.3 680.4 L181.1 678.5 L181.9 676.6 L182.8 674.6 L183.6 672.8 L184.4 671.1 L185.2 669.6 L186.0 668.6 L186.8 667.9 L187.6 667.7 L188.4 667.9 L189.2 668.4 L190.0 669.4 L190.9 670.6 L191.7 672.2 L192.5 673.8 L193.3 675.6 L194.1 677.5 L194.9 679.2 L195.7 680.9 L196.5 682.5 L197.3 683.9 L198.1 685.1 L198.9 686.2 L199.8 687.1 L200.6 687.8 L201.4 688.3 L202.2 688.7 L203.0 689.0 L203.8 689.1 L204.6 689.2 L205.4 689.3 L206.2 689.2 L207.1 689.1 L207.9 689.0 L208.7 688.9 L209.5 688.7 L210.3 688.5 L211.1 688.3 L211.9 688.0 L212.7 687.8 L213.5 687.5 L214.3 687.3 L215.2 687.1 L216.0 686.8 L216.8 686.6 L217.6 686.4 L218.4 686.2 L219.2 686.0 L220.0 685.9 L220.8 685.8 L221.6 685.7 L222.4 685.7 L223.2 685.6 L224.1 685.6 L224.9 685.7 L225.7 685.7 L226.5 685.7 L227.3 685.8 L228.1 685.8 L228.9 685.8 L229.7 685.7 L230.5 685.6 L231.3 685.5 L232.2 685.3 L233.0 685.0 L233.8 684.6 L234.6 684.1 L235.4 683.5 L236.2 682.8 L237.0 682.1 L237.8 681.2 L238.6 680.3 L239.5 679.3 L240.3 678.3 L241.1 677.3 L241.9 676.2 L242.7 675.2 L243.5 674.3 L244.3 673.5 L245.1 672.8 L245.9 672.2 L246.7 671.8 L247.5 671.5 L248.4 671.4 L249.2 671.5 L250.0 671.8 L250.8 672.1 L251.6 672.6 L252.4 673.3 L253.2 674.0 L254.0 674.8 L254.8 675.7 L255.7 676.7 L256.5 677.7 L257.3 678.7 L258.1 679.6 L258.9 680.6 L259.7 681.5 L260.5 682.3 L261.3 683.1 L262.1 683.9 L262.9 684.5 L263.8 685.1 L264.6 685.6 L265.4 686.0 L266.2 686.3 L267.0 686.6 L267.8 686.8 L268.6 686.9 L269.4 687.0 L270.2 687.0 L271.0 687.0 L271.9 686.9 L272.7 686.8 L273.5 686.7 L274.3 686.5 L275.1 686.3 L275.9 686.0 L276.7 685.7 L277.5 685.4 L278.3 685.1 L279.1 684.7 L279.9 684.3 L280.8 683.8 L281.6 683.3 L282.4 682.8 L283.2 682.3 L284.0 681.8 L284.8 681.2 L285.6 680.7 L286.4 680.1 L287.2 679.5 L288.1 679.0 L288.9 678.5 L289.7 678.0 L290.5 677.5 L291.3 677.1 L292.1 676.7 L292.9 676.4 L293.7 676.1 L294.5 675.9 L295.3 675.7 L296.1 675.6 L297.0 675.6 L297.8 675.6 L298.6 675.7 L299.4 675.9 L300.2 676.1 L301.0 676.3 L301.8 676.6 L302.6 677.0 L303.4 677.3 L304.2 677.8 L305.1 678.2 L305.9 678.7 L306.7 679.2 L307.5 679.7 L308.3 680.3 L309.1 680.8 L309.9 681.4 L310.7 681.9 L311.5 682.5 L312.4 683.0 L313.2 683.6 L314.0 684.1 L314.8 684.6 L315.6 685.1 L316.4 685.5 L317.2 686.0 L318.0 686.4 L318.8 686.8 L319.6 687.1 L320.4 687.5 L321.3 687.8 L322.1 688.0 L322.9 688.3 L323.7 688.5 L324.5 688.7 L325.3 688.9 L326.1 689.1 L326.9 689.2 L327.7 689.3 L328.5 689.3 L329.4 689.4 L330.2 689.4 L331.0 689.3 L331.8 689.2 L332.6 689.1 L333.4 688.9 L334.2 688.6 L335.0 688.2 L335.8 687.6 L336.6 686.9 L337.5 686.1 L338.3 685.0 L339.1 683.8 L339.9 682.2 L340.7 680.3 L341.5 678.0 L342.3 675.4 L343.1 672.2 L343.9 668.6 L344.8 664.4 L345.6 659.6 L346.4 654.2 L347.2 648.1 L348.0 641.3 L348.8 633.8 L349.6 625.6 L350.4 616.7 L351.2 607.2 L352.0 597.2 L352.9 586.6 L353.7 575.6 L354.5 564.3 L355.3 552.9 L356.1 541.5 L356.9 530.2 L357.7 519.3 L358.5 508.9 L359.3 499.2 L360.1 490.3 L360.9 482.6 L361.8 476.0 L362.6 470.7 L363.4 466.9 L364.2 464.5 L365.0 463.7 L365.8 464.5 L366.6 466.9 L367.4 470.7 L368.2 476.0 L369.1 482.6 L369.9 490.3 L370.7 499.2 L371.5 508.9 L372.3 519.3 L373.1 530.2 L373.9 541.4 L374.7 552.9 L375.5 564.3 L376.3 575.6 L377.1 586.5 L378.0 597.1 L378.8 607.2 L379.6 616.7 L380.4 625.5 L381.2 633.7 L382.0 641.2 L382.8 647.9 L383.6 654.0 L384.4 659.4 L385.2 664.1 L386.1 668.3 L386.9 671.8 L387.7 674.9 L388.5 677.5 L389.3 679.7 L390.1 681.5 L390.9 683.0 L391.7 684.2 L392.5 685.2 L393.4 685.9 L394.2 686.6 L395.0 687.0 L395.8 687.4 L396.6 687.7 L397.4 687.9 L398.2 688.0 L399.0 688.1 L399.8 688.1 L400.6 688.2 L401.4 688.2 L402.3 688.1 L403.1 688.1 L403.9 688.0 L404.7 687.9 L405.5 687.8 L406.3 687.6 L407.1 687.4 L407.9 687.2 L408.7 686.9 L409.6 686.7 L410.4 686.3 L411.2 686.0 L412.0 685.6 L412.8 685.2 L413.6 684.8 L414.4 684.3 L415.2 683.8 L416.0 683.3 L416.8 682.8 L417.6 682.3 L418.5 681.8 L419.3 681.4 L420.1 680.9 L420.9 680.5 L421.7 680.1 L422.5 679.8 L423.3 679.5 L424.1 679.3 L424.9 679.2 L425.8 679.1 L426.6 679.0 L427.4 679.1 L428.2 679.1 L429.0 679.3 L429.8 679.5 L430.6 679.7 L431.4 680.0 L432.2 680.4 L433.0 680.7 L433.9 681.1 L434.7 681.6 L435.5 682.0 L436.3 682.5 L437.1 683.0 L437.9 683.5 L438.7 684.0 L439.5 684.4 L440.3 684.9 L441.1 685.4 L441.9 685.8 L442.8 686.2 L443.6 686.6 L444.4 687.0 L445.2 687.4 L446.0 687.7 L446.8 688.0 L447.6 688.3 L448.4 688.5 L449.2 688.7 L450.1 688.9 L450.9 689.1 L451.7 689.3 L452.5 689.4 L453.3 689.5 L454.1 689.6 L454.9 689.7 L455.7 689.8 L456.5 689.9 L457.3 689.9 L458.2 690.0 L459.0 690.0 L459.8 690.0 L460.6 690.0 L461.4 690.0 L462.2 690.1 L463.0 690.1 L463.8 690.1 L464.6 690.0 L465.4 690.0 L466.2 690.0 L467.1 690.0 L467.9 690.0 L468.7 690.0 L469.5 690.0 L470.3 689.9 L471.1 689.9 L471.9 689.9 L472.7 689.9 L473.5 689.9 L474.3 689.8 L475.2 689.8 L476.0 689.8 L476.8 689.8 L477.6 689.7 L478.4 689.7 L479.2 689.7 L480.0 689.7 L480.8 689.7 L481.6 689.6 L482.4 689.6 L483.3 689.6 L484.1 689.6 L484.9 689.6 L485.7 689.6 L486.5 689.6 L487.3 689.5 L488.1 689.5 L488.9 689.5 L489.7 689.5 L490.6 689.5 L491.4 689.5 L492.2 689.5 L493.0 689.5 L493.8 689.5 L494.6 689.5 L495.4 689.6 L496.2 689.6 L497.0 689.6 L497.8 689.6 L498.7 689.6 L499.5 689.6 L500.3 689.6 L501.1 689.6 L501.9 689.7 L502.7 689.7 L503.5 689.7 L504.3 689.7 L505.1 689.7 L505.9 689.8 L506.8 689.8 L507.6 689.8 L508.4 689.8 L509.2 689.8 L510.0 689.8 L510.8 689.8 L511.6 689.9 L512.4 689.9 L513.2 689.9 L514.0 689.9 L514.9 689.9 L515.7 689.9 L516.5 689.9 L517.3 689.9 L518.1 689.9 L518.9 689.9 L519.7 689.9 L520.5 689.9 L521.3 689.9 L522.1 689.9 L523.0 689.9 L523.8 689.9 L524.6 689.9 L525.4 689.9 L526.2 689.9 L527.0 689.8 L527.8 689.8 L528.6 689.8 L529.4 689.8 L530.2 689.8 L531.0 689.7 L531.9 689.7 L532.7 689.7 L533.5 689.7 L534.3 689.6 L535.1 689.6 L535.9 689.6 L536.7 689.6 L537.5 689.5 L538.3 689.5 L539.1 689.5 L540.0 689.4 L540.8 689.4 L541.6 689.4 L542.4 689.3 L543.2 689.3 L544.0 689.3 L544.8 689.3 L545.6 689.2 L546.4 689.2 L547.2 689.2 L548.1 689.1 L548.9 689.1 L549.7 689.1 L550.5 689.0 L551.3 689.0 L552.1 689.0 L552.9 688.9 L553.7 688.9 L554.5 688.9 L555.3 688.9 L556.2 688.8 L557.0 688.8 L557.8 688.8 L558.6 688.8 L559.4 688.8 L560.2 688.8 L561.0 688.7 L561.8 688.7 L562.6 688.7 L563.5 688.7 L564.3 688.7 L565.1 688.7 L565.9 688.7 L566.7 688.7 L567.5 688.7 L568.3 688.7 L569.1 688.7 L569.9 688.7 L570.7 688.7 L571.5 688.7 L572.4 688.7 L573.2 688.7 L574.0 688.7 L574.8 688.7 L575.6 688.7 L576.4 688.7 L577.2 688.7 L578.0 688.7 L578.8 688.7 L579.6 688.7 L580.5 688.7 L581.3 688.7 L582.1 688.7 L582.9 688.7 L583.7 688.7 L584.5 688.6 L585.3 688.6 L586.1 688.6 L586.9 688.5 L587.8 688.4 L588.6 688.4 L589.4 688.3 L590.2 688.2 L591.0 688.1 L591.8 688.0 L592.6 687.9 L593.4 687.7 L594.2 687.6 L595.0 687.5 L595.9 687.3 L596.7 687.1 L597.5 687.0 L598.3 686.8 L599.1 686.6 L599.9 686.5 L600.7 686.3 L601.5 686.2 L602.3 686.0 L603.1 685.9 L604.0 685.8 L604.8 685.6 L605.6 685.5 L606.4 685.5 L607.2 685.4 L608.0 685.4 L608.8 685.4 L609.6 685.4 L610.4 685.4 L611.2 685.4 L612.1 685.5 L612.9 685.6 L613.7 685.7 L614.5 685.8 L615.3 686.0 L616.1 686.1 L616.9 686.3 L617.7 686.5 L618.5 686.6 L619.3 686.8 L620.1 687.0 L621.0 687.2 L621.8 687.4 L622.6 687.5 L623.4 687.7 L624.2 687.9 L625.0 688.0 L625.8 688.2 L626.6 688.3 L627.4 688.4 L628.2 688.5 L629.1 688.6 L629.9 688.6 L630.7 688.7 L631.5 688.7 L632.3 688.7 L633.1 688.7 L633.9 688.7 L634.7 688.7 L635.5 688.7 L636.4 688.6 L637.2 688.6 L638.0 688.5 L638.8 688.4 L639.6 688.3 L640.4 688.2 L641.2 688.1 L642.0 688.0 L642.8 687.9 L643.6 687.8 L644.4 687.7 L645.3 687.6 L646.1 687.4 L646.9 687.3 L647.7 687.2 L648.5 687.1 L649.3 687.0 L650.1 686.9 L650.9 686.8 L651.7 686.7 L652.5 686.6 L653.4 686.5 L654.2 686.4 L655.0 686.3 L655.8 686.2 L656.6 686.2 L657.4 686.1 L658.2 686.1 L659.0 686.0 L659.8 686.0 L660.6 686.0 L661.5 685.9 L662.3 685.9 L663.1 685.9 L663.9 685.9 L664.7 685.9 L665.5 685.9 L666.3 685.9 L667.1 685.9 L667.9 685.9 L668.8 685.9 L669.6 685.9 L670.4 685.9 L671.2 685.8 L672.0 685.8 L672.8 685.8 L673.6 685.8 L674.4 685.8 L675.2 685.7 L676.0 685.7 L676.9 685.7 L677.7 685.6 L678.5 685.6 L679.3 685.5 L680.1 685.5 L680.9 685.5 L681.7 685.4 L682.5 685.4 L683.3 685.3 L684.1 685.3 L685.0 685.2 L685.8 685.1 L686.6 685.1 L687.4 685.0 L688.2 684.9 L689.0 684.7 L689.8 684.6 L690.6 684.4 L691.4 684.3 L692.2 684.0 L693.0 683.8 L693.9 683.6 L694.7 683.3 L695.5 683.0 L696.3 682.7 L697.1 682.3 L697.9 682.0 L698.7 681.7 L699.5 681.3 L700.3 681.0 L701.1 680.6 L702.0 680.3 L702.8 680.0 L703.6 679.7 L704.4 679.4 L705.2 679.1 L706.0 678.9 L706.8 678.7 L707.6 678.5 L708.4 678.3 L709.2 678.1 L710.1 678.0 L710.9 677.9 L711.7 677.8 L712.5 677.7 L713.3 677.7 L714.1 677.6 L714.9 677.5 L715.7 677.5 L716.5 677.4 L717.4 677.4 L718.2 677.4 L719.0 677.3 L719.8 677.3 L720.6 677.3 L721.4 677.3 L722.2 677.3 L723.0 677.3 L723.8 677.4 L724.6 677.4 L725.5 677.5 L726.3 677.6 L727.1 677.7 L727.9 677.9 L728.7 678.1 L729.5 678.2 L730.3 678.4 L731.1 678.7 L731.9 678.9 L732.7 679.1 L733.6 679.3 L734.4 679.5 L735.2 679.7 L736.0 679.9 L736.8 680.0 L737.6 680.1 L738.4 680.2 L739.2 680.2 L740.0 680.2 L740.8 680.2 L741.6 680.0 L742.5 679.8 L743.3 679.6 L744.1 679.2 L744.9 678.8 L745.7 678.4 L746.5 677.8 L747.3 677.2 L748.1 676.5 L748.9 675.8 L749.8 674.9 L750.6 674.0 L751.4 673.1 L752.2 672.0 L753.0 671.0 L753.8 669.9 L754.6 668.7 L755.4 667.5 L756.2 666.3 L757.0 665.1 L757.9 663.8 L758.7 662.6 L759.5 661.3 L760.3 660.1 L761.1 658.9 L761.9 657.8 L762.7 656.6 L763.5 655.6 L764.3 654.6 L765.1 653.6 L765.9 652.8 L766.8 652.0 L767.6 651.3 L768.4 650.7 L769.2 650.2 L770.0 649.8 L770.8 649.6 L771.6 649.4 L772.4 649.3 L773.2 649.4 L774.0 649.5 L774.9 649.7 L775.7 649.9 L776.5 650.2 L777.3 650.6 L778.1 651.1 L778.9 651.6 L779.7 652.1 L780.5 652.8 L781.3 653.4 L782.1 654.2 L783.0 654.9 L783.8 655.8 L784.6 656.6 L785.4 657.5 L786.2 658.4 L787.0 659.4 L787.8 660.4 L788.6 661.4 L789.4 662.4 L790.2 663.4 L791.1 664.4 L791.9 665.5 L792.7 666.5 L793.5 667.5 L794.3 668.6 L795.1 669.6 L795.9 670.6 L796.7 671.6 L797.5 672.5 L798.4 673.5 L799.2 674.4 L800.0 675.3 L800.8 676.2 L801.6 677.0 L802.4 677.8 L803.2 678.6 L804.0 679.4 L804.8 680.1 L805.6 680.8 L806.5 681.4 L807.3 682.1 L808.1 682.7 L808.9 683.2 L809.7 683.8 L810.5 684.3 L811.3 684.8 L812.1 685.2 L812.9 685.6 L813.7 686.0 L814.6 686.4 L815.4 686.7 L816.2 687.0 L817.0 687.3 L817.8 687.6 L818.6 687.9 L819.4 688.1 L820.2 688.3 L821.0 688.5 L821.8 688.7 L822.6 688.8 L823.5 689.0 L824.3 689.1 L825.1 689.3 L825.9 689.4 L826.7 689.5 L827.5 689.6 L828.3 689.6 L829.1 689.7 L829.9 689.8 L830.8 689.8 L831.6 689.9 L832.4 689.9 L833.2 690.0 L834.0 690.0 L834.8 690.1 L835.6 690.1 L836.4 690.1 L837.2 690.1 L838.0 690.2 L838.9 690.2 L839.7 690.2 L840.5 690.2 L841.3 690.2 L842.1 690.2 L842.9 690.2 L843.7 690.3 L844.5 690.3 L845.3 690.3 L846.1 690.3 L846.9 690.3 L847.8 690.3 L848.6 690.3 L849.4 690.3 L850.2 690.3 L851.0 690.3 L851.8 690.3 L852.6 690.3 L853.4 690.3 L854.2 690.3 L855.0 690.3 L855.9 690.3 L856.7 690.3 L857.5 690.3 L858.3 690.3 L859.1 690.3 L859.9 690.3 L860.7 690.3 L861.5 690.3 L862.3 690.3 L863.1 690.3 L864.0 690.3 L864.8 690.3 L865.6 690.3 L866.4 690.3 L867.2 690.3 L868.0 690.3 L868.8 690.3 L869.6 690.3 L870.4 690.3 L871.2 690.3 L872.1 690.3 L872.9 690.3 L873.7 690.3 L874.5 690.3 L875.3 690.3 L876.1 690.3 L876.9 690.3 L877.7 690.3 L878.5 690.3 L879.4 690.3 L880.2 690.3 L881.0 690.3 L881.8 690.3 L882.6 690.3 L883.4 690.3 L884.2 690.3 L885.0 690.3 L885.8 690.3 L886.6 690.3 L887.5 690.3 L888.3 690.3 L889.1 690.3 L889.9 690.3 L890.7 690.3 L891.5 690.3" fill="none" stroke="#626262" stroke-width="1.05"/>
<line x1="81.5" y1="347.2" x2="81.5" y2="690" stroke="#fdcc08" stroke-width="2.8" stroke-dasharray="5.7 3.678"/>
<line x1="891.5" y1="347.2" x2="891.5" y2="690" stroke="#fdcc08" stroke-width="2.8" stroke-dasharray="5.7 3.678"/>
<line x1="41.2" y1="344" x2="41.2" y2="691" stroke="#62f862" stroke-width="1.8"/>
<line x1="932" y1="344" x2="932" y2="691" stroke="#62f862" stroke-width="1.8"/>
<line x1="41" y1="690.5" x2="932" y2="690.5" stroke="#ff5656" stroke-width="1.3"/>
<line x1="86.4" y1="677.2" x2="86.4" y2="690" stroke="#f01e3e" stroke-width="1.3"/>
<text x="86.4" y="677.4" text-anchor="middle" font-size="10.2" fill="#2a2a2a">1</text>
<line x1="132.5" y1="658.6" x2="132.5" y2="690" stroke="#f01e3e" stroke-width="1.3"/>
<text x="132.5" y="658.8" text-anchor="middle" font-size="10.2" fill="#2a2a2a">2</text>
<line x1="187.6" y1="667.7" x2="187.6" y2="690" stroke="#f01e3e" stroke-width="1.3"/>
<text x="187.6" y="667.9" text-anchor="middle" font-size="10.2" fill="#2a2a2a">3</text>
<line x1="248.4" y1="671.4" x2="248.4" y2="690" stroke="#f01e3e" stroke-width="1.3"/>
<text x="248.4" y="671.6" text-anchor="middle" font-size="10.2" fill="#2a2a2a">4</text>
<line x1="297.0" y1="675.6" x2="297.0" y2="690" stroke="#f01e3e" stroke-width="1.3"/>
<text x="297.0" y="675.8" text-anchor="middle" font-size="10.2" fill="#2a2a2a">5</text>
<line x1="365.0" y1="463.7" x2="365.0" y2="690" stroke="#f01e3e" stroke-width="1.3"/>
<text x="365.0" y="463.9" text-anchor="middle" font-size="10.2" fill="#2a2a2a">6</text>
<line x1="426.6" y1="679.0" x2="426.6" y2="690" stroke="#f01e3e" stroke-width="1.3"/>
<text x="426.6" y="679.2" text-anchor="middle" font-size="10.2" fill="#2a2a2a">7</text>
<line x1="772.4" y1="649.3" x2="772.4" y2="690" stroke="#f01e3e" stroke-width="1.3"/>
<text x="772.4" y="649.5" text-anchor="middle" font-size="10.2" fill="#2a2a2a">8</text>
<text x="31.9" y="694.9" text-anchor="end" font-size="10.5" letter-spacing="-0.25">0.0</text>
<text x="941" y="695.1" font-size="10.5" letter-spacing="-0.25">0.0</text>
<text x="31.9" y="656.0" text-anchor="end" font-size="10.5" letter-spacing="-0.25">0.1</text>
<text x="941" y="656.2" font-size="10.5" letter-spacing="-0.25">0.1</text>
<text x="31.9" y="617.2" text-anchor="end" font-size="10.5" letter-spacing="-0.25">0.2</text>
<text x="941" y="617.4" font-size="10.5" letter-spacing="-0.25">0.2</text>
<text x="31.9" y="578.4" text-anchor="end" font-size="10.5" letter-spacing="-0.25">0.3</text>
<text x="941" y="578.5" font-size="10.5" letter-spacing="-0.25">0.3</text>
<text x="31.9" y="539.5" text-anchor="end" font-size="10.5" letter-spacing="-0.25">0.4</text>
<text x="941" y="539.7" font-size="10.5" letter-spacing="-0.25">0.4</text>
<text x="31.9" y="500.6" text-anchor="end" font-size="10.5" letter-spacing="-0.25">0.5</text>
<text x="941" y="500.8" font-size="10.5" letter-spacing="-0.25">0.5</text>
<text x="31.9" y="461.8" text-anchor="end" font-size="10.5" letter-spacing="-0.25">0.6</text>
<text x="941" y="462.0" font-size="10.5" letter-spacing="-0.25">0.6</text>
<text x="31.9" y="422.9" text-anchor="end" font-size="10.5" letter-spacing="-0.25">0.7</text>
<text x="941" y="423.1" font-size="10.5" letter-spacing="-0.25">0.7</text>
<text x="31.9" y="384.1" text-anchor="end" font-size="10.5" letter-spacing="-0.25">0.8</text>
<text x="941" y="384.3" font-size="10.5" letter-spacing="-0.25">0.8</text>
<text x="81.5" y="702" text-anchor="middle" font-size="10.5" letter-spacing="-0.25">0.0</text>
<text x="162.5" y="702" text-anchor="middle" font-size="10.5" letter-spacing="-0.25">0.1</text>
<text x="243.5" y="702" text-anchor="middle" font-size="10.5" letter-spacing="-0.25">0.2</text>
<text x="324.5" y="702" text-anchor="middle" font-size="10.5" letter-spacing="-0.25">0.3</text>
<text x="405.5" y="702" text-anchor="middle" font-size="10.5" letter-spacing="-0.25">0.4</text>
<text x="486.5" y="702" text-anchor="middle" font-size="10.5" letter-spacing="-0.25">0.5</text>
<text x="567.5" y="702" text-anchor="middle" font-size="10.5" letter-spacing="-0.25">0.6</text>
<text x="648.5" y="702" text-anchor="middle" font-size="10.5" letter-spacing="-0.25">0.7</text>
<text x="729.5" y="702" text-anchor="middle" font-size="10.5" letter-spacing="-0.25">0.8</text>
<text x="810.5" y="702" text-anchor="middle" font-size="10.5" letter-spacing="-0.25">0.9</text>
<text x="891.5" y="702" text-anchor="middle" font-size="10.5" letter-spacing="-0.25">1.0</text>
<text x="34" y="341" font-size="10.5">AU</text>
<text x="924" y="341" font-size="10.5">AU</text>
<text x="35.6" y="702" font-size="10.5" font-style="italic">R<tspan font-size="8" font-style="normal" dx="0.3">F</tspan></text>
</svg>

<!-- right toolbar -->
<svg class="abs" style="left:978px;top:330px" width="270" height="62" viewBox="978 330 270 62">
 <!-- expert mode icon -->
 <path d="M998.4 346.3 V355.7 M1001.7 346.3 V355.7 M1005.1 346.3 V355.7" stroke="#c6c6c6" stroke-width="1.3"/>
 <path d="M987.4 350.5 H997.5" stroke="#2f72be" stroke-width="1.3"/>
 <path d="M988 350.8 V346.2 Q988.9 344.6 989.8 346.2 V350.8 Z" fill="#2f72be"/>
 <path d="M991.6 350.8 L992.7 340.2 Q993.7 337.6 994.7 340.2 L995.7 350.8 Z" fill="#2f72be"/>
 <path d="M996.8 350.8 Q998.6 342.5 1000.4 350.3" fill="none" stroke="#2f72be" stroke-width="1.2"/>
 <path d="M996.8 350.4 H1000 M1000.1 353.3 H1003.3 M1003.5 349.3 H1006.7" stroke="#2f72be" stroke-width="1.6"/>
 <!-- dropdown arrows -->
 <path d="M1013.5 361 H1020.5 L1017 366 Z M1055 361 H1062 L1058.5 366 Z M1165 361 H1172 L1168.5 366 Z" fill="#606060"/>
 <!-- zoom -->
 <circle cx="1035.5" cy="344.2" r="6.4" fill="none" stroke="#2f6fb8" stroke-width="2.2"/>
 <path d="M1040.2 349 L1045.8 354.6" stroke="#2f6fb8" stroke-width="3" stroke-linecap="round"/>
 <path d="M1035.5 340 V348.4 M1031.3 344.2 H1039.7" stroke="#3a9e66" stroke-width="2.2"/>
 <!-- unit -->
 <path d="M1072.5 336.5 L1092.5 356.5" stroke="#3a96d8" stroke-width="1.1"/>
 <text x="1078.8" y="341.3" font-size="7.2" fill="#3a96d8" font-family="Liberation Sans" stroke="#3a96d8" stroke-width="0.3">mm</text>
 <text x="1073" y="354" font-size="8.5" fill="#3a96d8" font-style="italic" font-weight="bold" font-family="Liberation Sans">R<tspan font-size="6.5" font-style="normal" dx="-0.2">F</tspan></text>
 <!-- collapse -->
 <rect x="1099.4" y="330.8" width="34.7" height="58.4" fill="#0a73c6"/>
 <path d="M1109 337.3 V354.7 M1124.3 337.3 V354.7" stroke="#fff" stroke-width="2"/>
 <path d="M1111 342.5 L1116 346 L1111 349.5 Z M1122.3 342.5 L1117.3 346 L1122.3 349.5 Z" fill="#dfeefa"/>
 <!-- export -->
 <path d="M1139.5 336.5 H1149.5 L1154.5 341.5 V354.5 H1139.5 Z" fill="#fff" stroke="#8a8a8a" stroke-width="1"/>
 <path d="M1149.5 336.5 V341.5 H1154.5" fill="none" stroke="#8a8a8a" stroke-width="1"/>
 <path d="M1148.5 351.5 H1157 M1154 348.3 L1157.3 351.5 L1154 354.7" fill="none" stroke="#2f6fb8" stroke-width="1.8"/>
 <rect x="1175.4" y="331" width="13.6" height="58" fill="#d9d9d9"/>
 <path d="M1180 356 H1186 L1183 361 Z" fill="#c2c2c2"/>
 <path d="M1180 354.5 H1186" stroke="#c2c2c2" stroke-width="1"/>
</svg>
<div class="tool" style="left:978px;top:360px;width:37px">Expert<br>mode</div>
<div class="tool" style="left:1022px;top:360px;width:31px">Zoom</div>
<div class="tool" style="left:1067px;top:360px;width:31px">Unit</div>
<div class="tool" style="left:1099px;top:360px;width:35px;color:#fff">Collapse</div>
<div class="tool" style="left:1132px;top:360px;width:31px">Export</div>

<!-- scrollbar -->
<div class="abs" style="left:1226px;top:399px;width:14px;height:306px;background:#f4f4f4"></div>
<div class="abs" style="left:1227px;top:413.5px;width:11px;height:229px;background:#dcdcdc"></div>
<div class="abs" style="left:1229.8px;top:404px;width:0;height:0;border-left:3px solid transparent;border-right:3px solid transparent;border-bottom:4.3px solid #111"></div>
<svg class="abs" style="left:1229px;top:695px" width="8" height="6" viewBox="0 0 8 6"><path d="M0.8 0.5 H6.6 L3.7 4.8 Z" fill="#111"/></svg>

<!-- splitter dots -->
<div class="dot" style="left:971px;top:469px"></div>
<div class="dot" style="left:971px;top:477.5px"></div>
<div class="dot" style="left:971px;top:486px"></div>
<div class="abs" style="left:970.5px;top:514px;width:0;height:0;border-top:3.5px solid transparent;border-bottom:3.5px solid transparent;border-left:4px solid #111"></div>
<div class="dot" style="left:971px;top:546px"></div>
<div class="dot" style="left:971px;top:554.5px"></div>
<div class="dot" style="left:971px;top:563px"></div>

<!-- panels -->
<div class="panel" style="top:398.8px;height:30.9px"></div>
<div class="cb" style="left:989.2px;top:405.8px"><svg width="13" height="10" viewBox="0 0 13 10"><path d="M2.2 5.6 L5 8.3 L11.3 2.4" fill="none" stroke="#fff" stroke-width="1.7"/></svg></div>
<div class="ptitle" style="left:1010.4px;top:407.7px">Bounds</div>
<svg class="abs" style="left:1204px;top:411.5px" width="10" height="6"><path d="M0.5 0.5 L4.7 4.8 L8.9 0.5" fill="none" stroke="#555" stroke-width="1.3"/></svg>

<div class="panel" style="top:438.3px;height:30.5px"></div>
<div class="cb" style="left:989.2px;top:445px"><svg width="13" height="10" viewBox="0 0 13 10"><path d="M2.2 5.6 L5 8.3 L11.3 2.4" fill="none" stroke="#fff" stroke-width="1.7"/></svg></div>
<div class="ptitle" style="left:1010.4px;top:447.2px">Smoothing</div>
<svg class="abs" style="left:1204px;top:450.5px" width="10" height="6"><path d="M0.5 0.5 L4.7 4.8 L8.9 0.5" fill="none" stroke="#555" stroke-width="1.3"/></svg>

<div class="panel" style="top:477.5px;height:69.5px"></div>
<div class="cb" style="left:989.2px;top:484px"><svg width="13" height="10" viewBox="0 0 13 10"><path d="M2.2 5.6 L5 8.3 L11.3 2.4" fill="none" stroke="#fff" stroke-width="1.7"/></svg></div>
<div class="ptitle" style="left:1010.4px;top:486.2px">Baseline</div>
<div class="ibtn" style="left:1060.7px;top:481.4px;width:21px;height:22.4px"></div>
<svg class="abs" style="left:1058px;top:478px" width="28" height="28" viewBox="1058 478 28 28"><path d="M1063.8 499.3 L1064.6 497.6 L1065.3 493.8 L1066.3 497.6 L1068.4 497.4 L1069.2 489 L1069.8 486.2 L1070.5 489 L1071.2 497.1 L1072.2 497 L1073.2 492.6 Q1074 491.6 1075 492.8 L1076.5 495.2 L1078.2 496.3 L1077.8 497.5 L1064.2 499.6 Z" fill="#1e80cc" stroke="#1e80cc" stroke-width="0.6" stroke-linejoin="round"/></svg>
<svg class="abs" style="left:1204px;top:488.5px" width="10" height="6"><path d="M0.5 5.3 L4.7 1 L8.9 5.3" fill="none" stroke="#555" stroke-width="1.3"/></svg>
<div class="abs" style="left:991.5px;top:510.8px;width:232.5px;height:34.2px;background:#fafafa;border-bottom:1px solid #e0e0e0"></div>
<div class="abs" style="left:1007px;top:520px;font-size:12.3px;white-space:nowrap;font-weight:bold;color:#111">LS</div><div class="abs" style="left:1025px;top:520px;font-size:12.3px;white-space:nowrap;color:#777">/</div><div class="abs" style="left:1034.3px;top:520px;font-size:12.3px;white-space:nowrap;color:#9a9a9a">Interactive</div>
<svg class="abs" style="left:1201.8px;top:522.6px" width="10" height="6"><path d="M0.5 5.3 L4.7 1 L8.9 5.3" fill="none" stroke="#555" stroke-width="1.3"/></svg>

<div class="panel" style="top:555px;height:30.5px"></div>
<div class="abs" style="left:989.3px;top:561.3px;width:17.2px;height:17.4px;border:1.5px solid #7c7c7c;border-radius:1px;background:#e8e8e8"></div>
<div class="ptitle" style="left:1010.4px;top:563.7px">Profile subtraction</div>
<svg class="abs" style="left:1204px;top:567.5px" width="10" height="6"><path d="M0.5 0.5 L4.7 4.8 L8.9 0.5" fill="none" stroke="#555" stroke-width="1.3"/></svg>

<div class="panel" style="top:594.2px;height:110.8px"></div>
<div class="cb" style="left:989.2px;top:600.2px"><svg width="13" height="10" viewBox="0 0 13 10"><path d="M2.2 5.6 L5 8.3 L11.3 2.4" fill="none" stroke="#fff" stroke-width="1.7"/></svg></div>
<div class="ptitle" style="left:1010.4px;top:602.2px">Peaks</div>
<div class="ibtn" style="left:1047.7px;top:598.4px;width:22.6px;height:20.7px"></div>
<div class="ibtn" style="left:1074.3px;top:598.4px;width:21.5px;height:20.7px"></div>
<div class="ibtn" style="left:1100px;top:598.4px;width:22.8px;height:20.7px"></div>
<svg class="abs" style="left:1040px;top:595px" width="90" height="28" viewBox="1040 595 90 28">
 <path d="M1052.5 612.5 C1054.5 612 1055.3 608 1055.7 603.5 Q1056.3 602 1056.9 603.5 C1057.3 608 1058 612 1059.5 612.5 Z" fill="url(#pk)"/>
 <circle cx="1061.7" cy="611.6" r="4.1" fill="#3e9a66"/>
 <path d="M1061.7 609.2 V614 M1059.3 611.6 H1064.1" stroke="#fff" stroke-width="1.3"/>
 <path d="M1078.5 612.5 C1080.5 612 1081.3 608 1081.7 603.5 Q1082.3 602 1082.9 603.5 C1083.3 608 1084 612 1085.5 612.5 Z" fill="url(#pk)"/>
 <circle cx="1087.7" cy="611.6" r="4.1" fill="#e05438"/>
 <path d="M1085.3 611.6 H1090.1" stroke="#fff" stroke-width="1.5"/>
 <path d="M1105 612.5 C1106.5 612 1107.3 608 1107.7 603.5 Q1108.3 602 1108.9 603.5 C1109.3 608 1110 612 1111 612.5 Z" fill="url(#pk)"/>
 <path d="M1112 610 C1113 609 1113.5 606 1114 603.5 Q1114.5 602.5 1115 603.5 C1115.5 606 1116 609 1116.5 610 Z" fill="url(#pk)"/>
 <path d="M1110.8 609 L1116.2 614.4 M1116.2 609 L1110.8 614.4" stroke="#e05438" stroke-width="1.9"/>
</svg>
<svg class="abs" style="left:1204px;top:605.5px" width="10" height="6"><path d="M0.5 5.3 L4.7 1 L8.9 5.3" fill="none" stroke="#555" stroke-width="1.3"/></svg>
<div class="abs" style="left:991.5px;top:631.5px;font-size:12.1px;white-space:nowrap">Resolution</div>
<div class="abs" style="left:1053.9px;top:627.1px;width:143.5px;height:22.6px;background:#efefef;border-right:1px solid #d6e6f2"></div>
<div class="abs" style="left:1054.6px;top:631.6px;font-size:12.1px;white-space:nowrap;letter-spacing:-0.2px">USP</div>
<div class="abs" style="left:1180px;top:635.5px;width:0;height:0;border-left:4px solid transparent;border-right:4px solid transparent;border-top:5.5px solid #666"></div>
<div class="ibtn" style="left:1202px;top:627px;width:21.7px;height:23px"></div>
<svg class="abs" style="left:1200px;top:628px" width="24" height="20" viewBox="1200 628 24 20"><path d="M1205.6 638.6 Q1212.4 629.8 1219.2 638.6 Q1212.4 646.4 1205.6 638.6 Z" fill="#fff" stroke="#efb45a" stroke-width="1.3"/><circle cx="1212.5" cy="637.7" r="3" fill="#3c72c0"/><circle cx="1213.4" cy="636.8" r="0.9" fill="#9ab4d8"/></svg>
<div class="abs" style="left:992px;top:654.7px;width:232px;height:50.3px;background:#fafafa"></div>
<div class="abs" style="left:1016.3px;top:664px;font-size:12.2px;white-space:nowrap;color:#9a9a9a;letter-spacing:-0.2px">OQI</div><div class="abs" style="left:1040.6px;top:664px;font-size:12.2px;white-space:nowrap;color:#666">/</div><div class="abs" style="left:1049.6px;top:664px;font-size:12.1px;white-space:nowrap;color:#1a1a1a;font-weight:bold;letter-spacing:-0.3px">Gauss (legacy)</div><div class="abs" style="left:1138px;top:664px;font-size:12.2px;white-space:nowrap;color:#666">/</div><div class="abs" style="left:1146.6px;top:664px;font-size:12.2px;white-space:nowrap;color:#9a9a9a">Gauss</div>
<svg class="abs" style="left:1201.8px;top:667px" width="10" height="6"><path d="M0.5 5.3 L4.7 1 L8.9 5.3" fill="none" stroke="#555" stroke-width="1.3"/></svg>
<div class="abs" style="left:997px;top:693.5px;font-size:12.1px;white-space:nowrap">Separation</div>
<div class="abs" style="left:1061px;top:698.5px;width:103px;height:1px;background:#c8c8c8"></div>
<div class="abs" style="left:1077.5px;top:693px;width:11px;height:11px;border-radius:50%;background:#0a73c6"></div>

<div class="abs" style="left:1174.3px;top:694px;font-size:12.5px;white-space:nowrap">1.00</div>
<svg class="abs" style="left:1212px;top:694px" width="7" height="13" viewBox="0 0 7 13"><path d="M0.7 4.8 H5.7 L3.2 1 Z M0.7 8.1 H5.7 L3.2 11.7 Z" fill="#1a1a1a"/></svg>

<div class="abs" style="left:978px;top:705px;width:262px;height:4.6px;background:#fafafa"></div>
<div class="abs" style="left:1066.7px;top:704.6px;width:1.3px;height:1.3px;background:#444"></div><div class="abs" style="left:1075.7px;top:704.6px;width:1.3px;height:1.3px;background:#444"></div><div class="abs" style="left:1085.3px;top:704.6px;width:1.3px;height:1.3px;background:#444"></div><div class="abs" style="left:1095.1px;top:704.6px;width:1.3px;height:1.3px;background:#444"></div><div class="abs" style="left:1104.4px;top:704.6px;width:1.3px;height:1.3px;background:#444"></div><div class="abs" style="left:1114.1px;top:704.6px;width:1.3px;height:1.3px;background:#444"></div><div class="abs" style="left:1123.4px;top:704.6px;width:1.3px;height:1.3px;background:#444"></div><div class="abs" style="left:1132.8px;top:704.6px;width:1.3px;height:1.3px;background:#444"></div><div class="abs" style="left:1142.1px;top:704.6px;width:1.3px;height:1.3px;background:#444"></div><div class="abs" style="left:1151.2px;top:704.6px;width:1.3px;height:1.3px;background:#444"></div><div class="abs" style="left:1158.7px;top:704.6px;width:1.3px;height:1.3px;background:#444"></div>

</body></html>
